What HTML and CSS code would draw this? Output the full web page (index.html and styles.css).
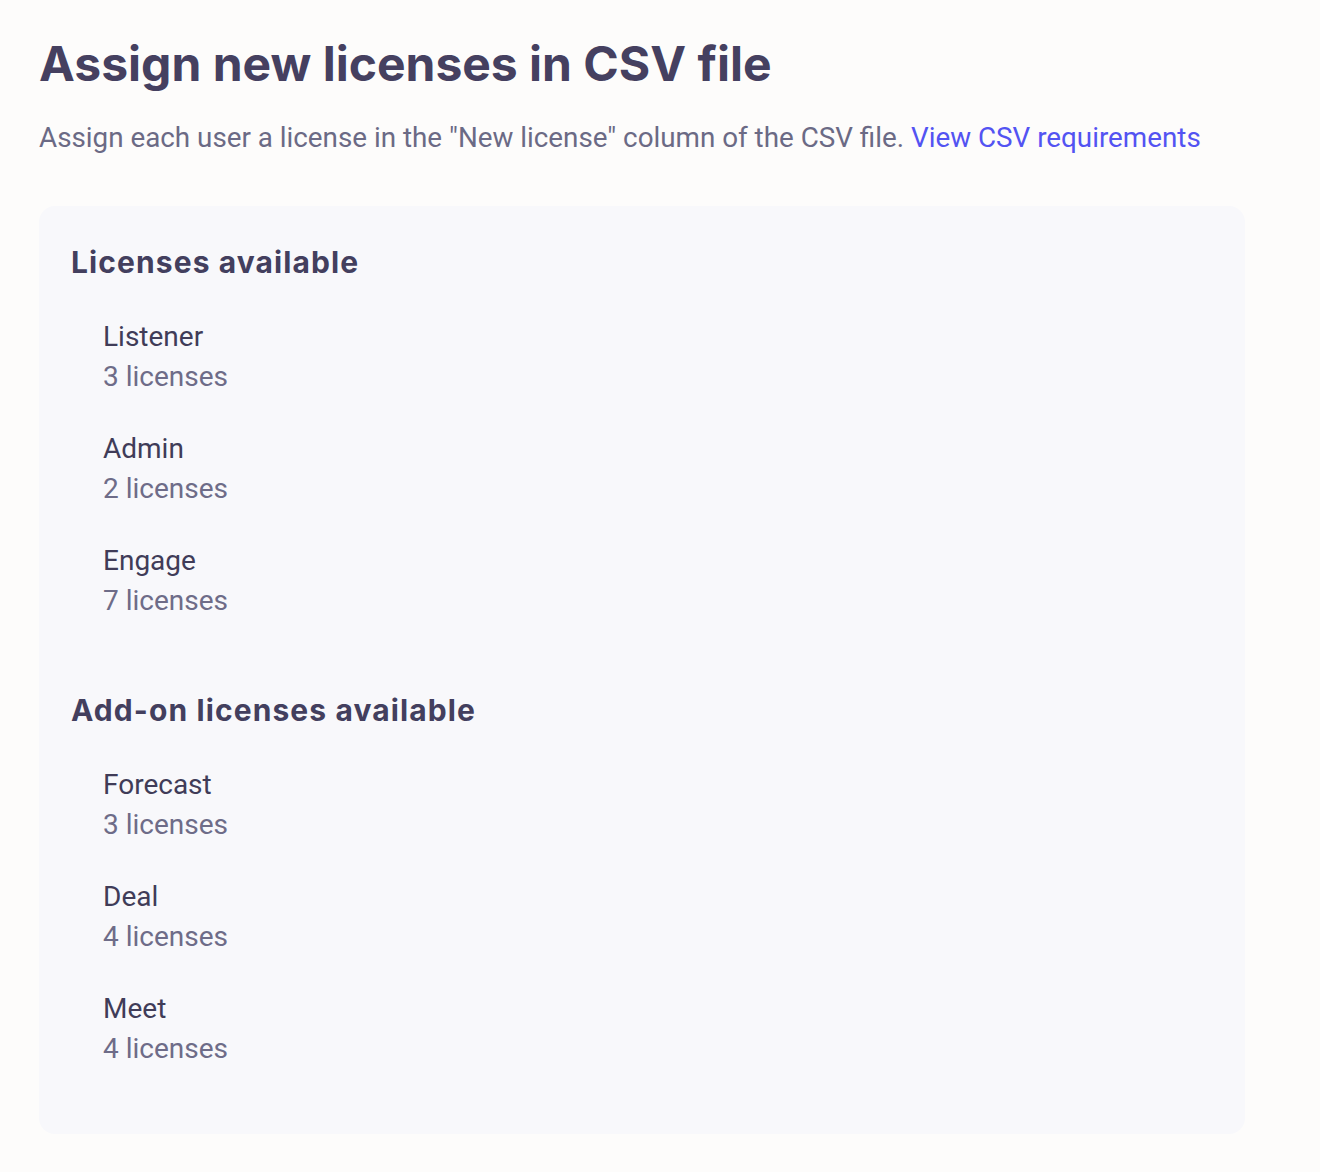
FILE: index.html
```html
<!DOCTYPE html>
<html lang="en">

<head>
    <meta charset="UTF-8">
    <meta name="viewport" content="width=device-width, initial-scale=1.0">
    <title>Assign new licenses</title>
    <link rel="stylesheet" href="styles.css">
</head>

<body>
    <div class="container">
        <h1 class="page-title">Assign new licenses in CSV file</h1>
        <p class="page-intro">Assign each user a license in the "New license" column of the CSV file. <a href="#" class="link">View CSV requirements</a></p>

        <div class="license-card">
            <section class="license-section">
                <h2 class="section-title">Licenses available</h2>
                <ul class="license-list">
                    <li class="license-item">
                        <span class="license-name">Listener</span>
                        <span class="license-count">3 licenses</span>
                    </li>
                    <li class="license-item">
                        <span class="license-name">Admin</span>
                        <span class="license-count">2 licenses</span>
                    </li>
                    <li class="license-item">
                        <span class="license-name">Engage</span>
                        <span class="license-count">7 licenses</span>
                    </li>
                </ul>
            </section>
            <section class="license-section">
                <h2 class="section-title">Add-on licenses available</h2>
                <ul class="license-list">
                    <li class="license-item">
                        <span class="license-name">Forecast</span>
                        <span class="license-count">3 licenses</span>
                    </li>
                    <li class="license-item">
                        <span class="license-name">Deal</span>
                        <span class="license-count">4 licenses</span>
                    </li>
                    <li class="license-item">
                        <span class="license-name">Meet</span>
                        <span class="license-count">4 licenses</span>
                    </li>
                </ul>
            </section>
        </div>
    </div>
</body>

</html>
```

FILE: styles.css
```css
body {
    background-color: #fdfcfb;
    color: #433f5e;
    font-family: 'Roboto', 'Liberation Sans', sans-serif;
    margin: 0;
    padding: 36px 39px;
}

.container {
    width: 1206px;
}

.page-title {
    font-family: 'Inter', 'Liberation Sans', sans-serif;
    font-size: 48px;
    font-weight: 700;
    line-height: 56px;
    margin: 0;
    color: #454060;
}

.page-intro {
    font-size: 27.8px;
    line-height: 34px;
    margin: 29px 0 0;
    color: #6b6a85;
}

.link {
    color: #5353f2;
    text-decoration: none;
}

.license-card {
    margin-top: 51px;
    background: #f8f8fb;
    border-radius: 16px;
    padding: 36px 32px 65px;
}

.license-section + .license-section {
    margin-top: 69px;
}

.section-title {
    font-family: 'Inter', 'Liberation Sans', sans-serif;
    font-size: 30px;
    font-weight: 700;
    letter-spacing: 1.1px;
    line-height: 40px;
    margin: 0;
    color: #433f5e;
}

.license-list {
    list-style: none;
    margin: 35px 0 0;
    padding: 0 0 0 32px;
    display: flex;
    flex-direction: column;
    gap: 32px;
}

.license-item {
    display: flex;
    flex-direction: column;
}

.license-name,
.license-count {
    font-size: 28px;
    line-height: 40px;
}

.license-name {
    color: #403c58;
}

.license-count {
    color: #6e6c88;
}
```
